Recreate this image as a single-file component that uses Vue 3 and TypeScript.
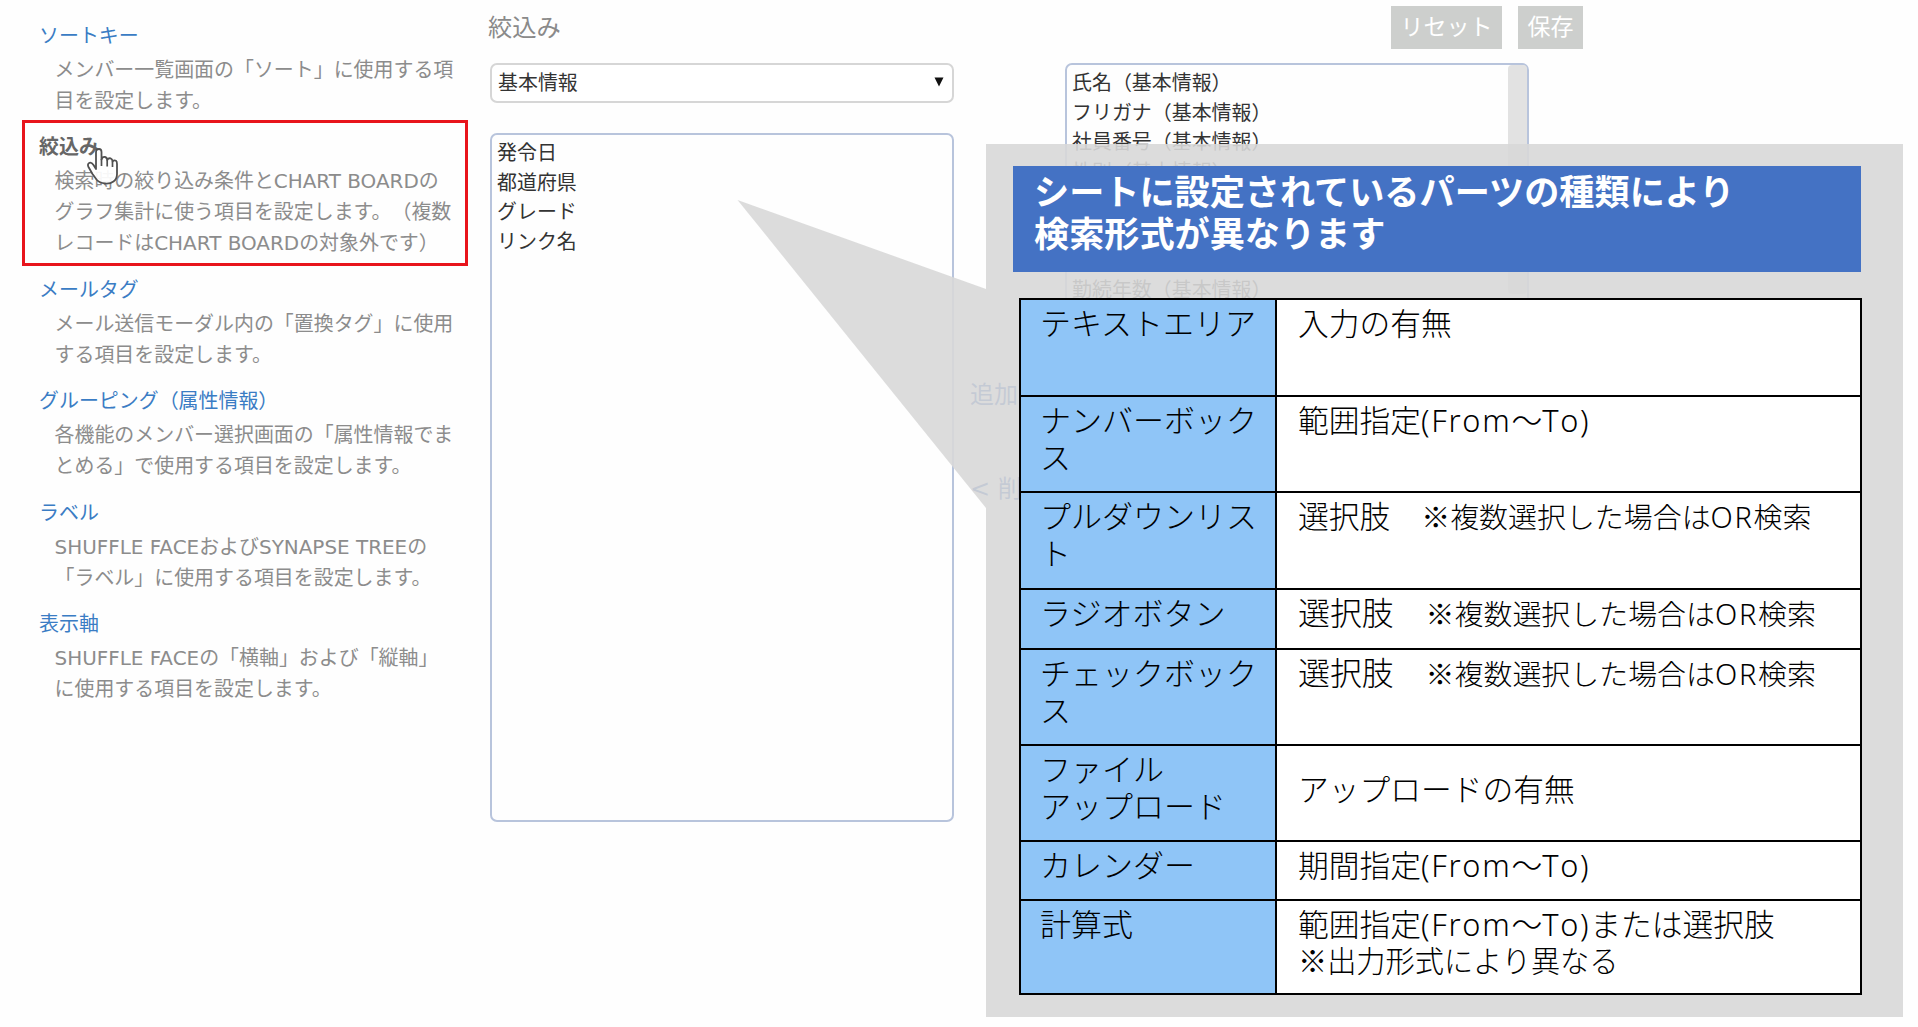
<script setup lang="ts">
interface MenuEntry {
  title: string
  lines: string[]
  active?: boolean
}

interface TableRow {
  height: number
  label: string[]
  value?: string[]
  choice?: string
  small?: boolean
  middle?: boolean
}

const menu: MenuEntry[] = [
  { title: 'ソートキー', lines: ['メンバー一覧画面の「ソート」に使用する項', '目を設定します。'] },
  {
    title: '絞込み',
    lines: ['検索時の絞り込み条件とCHART BOARDの', 'グラフ集計に使う項目を設定します。（複数', 'レコードはCHART BOARDの対象外です）'],
    active: true,
  },
  { title: 'メールタグ', lines: ['メール送信モーダル内の「置換タグ」に使用', 'する項目を設定します。'] },
  { title: 'グルーピング（属性情報）', lines: ['各機能のメンバー選択画面の「属性情報でま', 'とめる」で使用する項目を設定します。'] },
  { title: 'ラベル', lines: ['SHUFFLE FACEおよびSYNAPSE TREEの', '「ラベル」に使用する項目を設定します。'] },
  { title: '表示軸', lines: ['SHUFFLE FACEの「横軸」および「縦軸」', 'に使用する項目を設定します。'] },
]

const available: string[] = ['発令日', '都道府県', 'グレード', 'リンク名']
const selected: string[] = [
  '氏名（基本情報）',
  'フリガナ（基本情報）',
  '社員番号（基本情報）',
  '性別（基本情報）',
  '',
  '',
  '',
  '勤続年数（基本情報）',
]

const rows: TableRow[] = [
  { height: 97, label: ['テキストエリア'], value: ['入力の有無'] },
  { height: 96, label: ['ナンバーボック', 'ス'], value: ['範囲指定(From～To)'] },
  { height: 97, label: ['プルダウンリス', 'ト'], choice: '選択肢　', small: true },
  { height: 60, label: ['ラジオボタン'], choice: '選択肢　' },
  { height: 96, label: ['チェックボック', 'ス'], choice: '選択肢　' },
  { height: 96, label: ['ファイル', 'アップロード'], value: ['アップロードの有無'], middle: true },
  { height: 59, label: ['カレンダー'], value: ['期間指定(From～To)'] },
  { height: 94, label: ['計算式'], value: ['範囲指定(From～To)または選択肢'], choice: '' },
]

// Latin runs use their own family, slightly heavier than the light Japanese runs.
const runs = (text: string): string[] => text.split(/([A-Za-z()]+)/).filter((t) => t !== '')
const isLatin = (text: string): boolean => /^[A-Za-z()]/.test(text)
</script>

<template>
  <div class="page">
    <nav class="sidebar">
      <section v-for="m in menu" :key="m.title" class="entry" :class="{ active: m.active }">
        <h3>{{ m.title }}</h3>
        <p v-for="l in m.lines" :key="l">{{ l }}</p>
        <svg v-if="m.active" class="hand" width="34" height="40" viewBox="0 0 34 40">
          <path
            d="M10 22V5.500Q10 2 13 2Q15.500 2 15.500 5V12.500Q16.500 9.500 19 10Q21 10.400 21.200 13Q22.500 10.800 24.600 11.400Q26.500 12 26.500 14.500Q28.200 12.800 30 13.800Q31 14.500 31 17V27Q31 32 27.500 34.500Q24 37 19 36.500Q13.500 36 10.500 32.500L6.500 27L2.500 20Q1 17 3.500 15.800Q5.500 15 7.500 18Z"
            fill="#fff" fill-opacity=".93" stroke="#505050" stroke-width="1.8" stroke-linejoin="round"
          />
          <path d="M15.500 12V19M21.200 13V19.500M26.500 14.500V20" fill="none" stroke="#505050" stroke-width="1.7" />
        </svg>
      </section>
    </nav>

    <main class="main">
      <header class="bar">
        <h2>絞込み</h2>
        <div class="buttons">
          <button type="button" class="reset">リセット</button>
          <button type="button" class="save">保存</button>
        </div>
      </header>
      <div class="columns">
        <div class="left">
          <div class="select">
            <span>基本情報</span>
            <svg width="12" height="10" viewBox="0 0 12 10"><path d="M1.500 0.500H10.500L6 9.500Z" fill="#111" /></svg>
          </div>
          <ul class="list">
            <li v-for="o in available" :key="o">{{ o }}</li>
          </ul>
        </div>
        <div class="move">
          <span>追加 &gt;</span>
          <span>&lt; 削除</span>
        </div>
        <div class="list chosen">
          <ul>
            <li v-for="(o, i) in selected" :key="i">{{ o }}</li>
          </ul>
          <i class="scroll"></i>
        </div>
      </div>
    </main>

    <svg class="tail" width="250" height="309" viewBox="0 0 250 309">
      <path d="M0.500 0L249 89V308Z" fill="#d8d8d8" fill-opacity=".9" />
    </svg>
    <aside class="callout">
      <div class="banner">シートに設定されているパーツの種類により<br />検索形式が異なります</div>
      <div class="table">
        <div v-for="r in rows" :key="r.label[0]" class="row" :style="{ height: r.height + 'px' }">
          <div class="label">
            <div v-for="l in r.label" :key="l">{{ l }}</div>
          </div>
          <div class="value" :class="{ middle: r.middle }">
            <div v-for="v in r.value" :key="v"><span v-for="(t, i) in runs(v)" :key="i" :class="{ latin: isLatin(t) }">{{ t }}</span></div>
            <div v-if="r.choice" class="choice" :class="{ narrow: r.small }">{{ r.choice }}<span class="small"><span class="mark">※</span>複数選択した場合は<span class="latin">OR</span>検索</span></div>
            <div v-if="r.choice === ''" class="out"><span class="mark">※</span>出力形式により異なる</div>
          </div>
        </div>
      </div>
    </aside>
  </div>
</template>

<style>
body {
  margin: 0;
  background: #fefefe;
}
</style>

<style scoped>
.page {
  position: relative;
  display: flex;
  width: 1918px;
  height: 1027px;
  overflow: hidden;
  background: #fefefe;
  font-family: 'DejaVu Sans', 'Noto Sans CJK JP', sans-serif;
  font-size: 19.960px;
  text-spacing-trim: space-all;
}
h2,
h3,
p,
ul {
  margin: 0;
  padding: 0;
  font-weight: 400;
  font-size: inherit;
  list-style: none;
}
.sidebar {
  width: 490px;
  flex: none;
  padding-top: 20.500px;
  box-sizing: border-box;
}
.entry {
  position: relative;
  padding-left: 39px;
  margin-bottom: 15.500px;
  line-height: 31px;
  white-space: nowrap;
}
.entry h3 {
  margin-bottom: 3px;
  color: #3a7cc4;
}
.entry p {
  padding-left: 15.500px;
  color: #8c8c8c;
}
.entry.active h3 {
  color: #666;
  font-weight: 700;
}
.entry.active::before {
  content: '';
  position: absolute;
  left: 22px;
  top: -12.500px;
  width: 440px;
  height: 140px;
  border: 3px solid #e8141c;
}
.hand {
  position: absolute;
  left: 86px;
  top: 14.500px;
}
.main {
  flex: 1;
}
.bar {
  display: flex;
  height: 63px;
}
.bar h2 {
  width: 901px;
  margin-left: -2px;
  padding-top: 9.500px;
  box-sizing: border-box;
  font-size: 24.300px;
  line-height: 36px;
  color: #8a8a8a;
}
.buttons {
  display: flex;
  gap: 16px;
  padding: 5.500px 0 0 2px;
}
button {
  height: 43px;
  padding: 0 0 5px;
  border: 0;
  background: #cdcfcd;
  color: #fff;
  font: inherit;
  font-size: 23px;
}
.reset {
  width: 111px;
}
.save {
  width: 65px;
}
.columns {
  display: flex;
}
.left {
  width: 464px;
}
.select {
  display: flex;
  align-items: center;
  justify-content: space-between;
  height: 39.500px;
  box-sizing: border-box;
  padding: 0 7px 2px 6px;
  border: 2px solid #d6d6d6;
  border-radius: 7px;
  background: #fff;
  color: #333;
}
.list {
  box-sizing: border-box;
  border: 2px solid #b8c4dc;
  border-radius: 7px;
  background: #fefefe;
  color: #333;
  line-height: 29.600px;
}
.left .list {
  height: 689px;
  margin-top: 30.500px;
  padding: 4px 5px;
}
.list li {
  height: 29.600px;
}
.move {
  display: flex;
  flex-direction: column;
  gap: 58px;
  width: 95px;
  margin-left: 16px;
  padding-top: 314px;
  box-sizing: border-box;
  font-size: 24px;
  line-height: 36px;
  color: #1048b0;
  white-space: pre;
}
.chosen {
  display: flex;
  justify-content: space-between;
  width: 464px;
  height: 689px;
  padding: 4px 0 0 5px;
}
.scroll {
  width: 19px;
  height: 229px;
  margin-top: -4px;
  border-radius: 4px;
  background: #e2e2e2;
}
.tail {
  position: absolute;
  left: 737px;
  top: 200px;
}
.callout {
  position: absolute;
  left: 986px;
  top: 144px;
  width: 917px;
  height: 873px;
  box-sizing: border-box;
  padding: 22px 0 0 27px;
  background: rgba(216, 216, 216, 0.9);
}
.banner {
  width: 848px;
  height: 106px;
  box-sizing: border-box;
  padding: 6px 0 0 21px;
  background: #4472c4;
  color: #fff;
  font-weight: 700;
  font-size: 35.150px;
  line-height: 41.700px;
  white-space: nowrap;
}
.table {
  width: 843px;
  margin: 26px 0 0 6px;
  box-sizing: border-box;
  border: solid #000;
  border-width: 2px 2px 0 2px;
  background: #fff;
  color: #000;
  font-size: 30.750px;
  font-weight: 300;
  line-height: 37.500px;
  white-space: nowrap;
}
.row {
  display: flex;
  box-sizing: border-box;
  border-bottom: 2px solid #000;
}
.label {
  width: 256px;
  box-sizing: border-box;
  padding: 5.500px 0 0 19px;
  border-right: 2px solid #000;
  background: #8fc5f7;
  font-size: 31px;
}
.value {
  flex: 1;
  padding: 5.500px 0 0 21px;
}
.middle {
  padding-top: 26px;
}
.latin {
  font-family: 'Noto Sans', sans-serif;
  font-weight: 350;
  font-kerning: none;
  letter-spacing: 1.700px;
  line-height: 1;
}
.choice {
  font-size: 31.900px;
}
.narrow {
  font-size: 30.800px;
}
.small {
  font-size: 28.950px;
}
.out {
  font-size: 29.200px;
}
.mark {
  font-family: 'Noto Sans CJK JP', sans-serif;
  line-height: 1;
}
</style>
